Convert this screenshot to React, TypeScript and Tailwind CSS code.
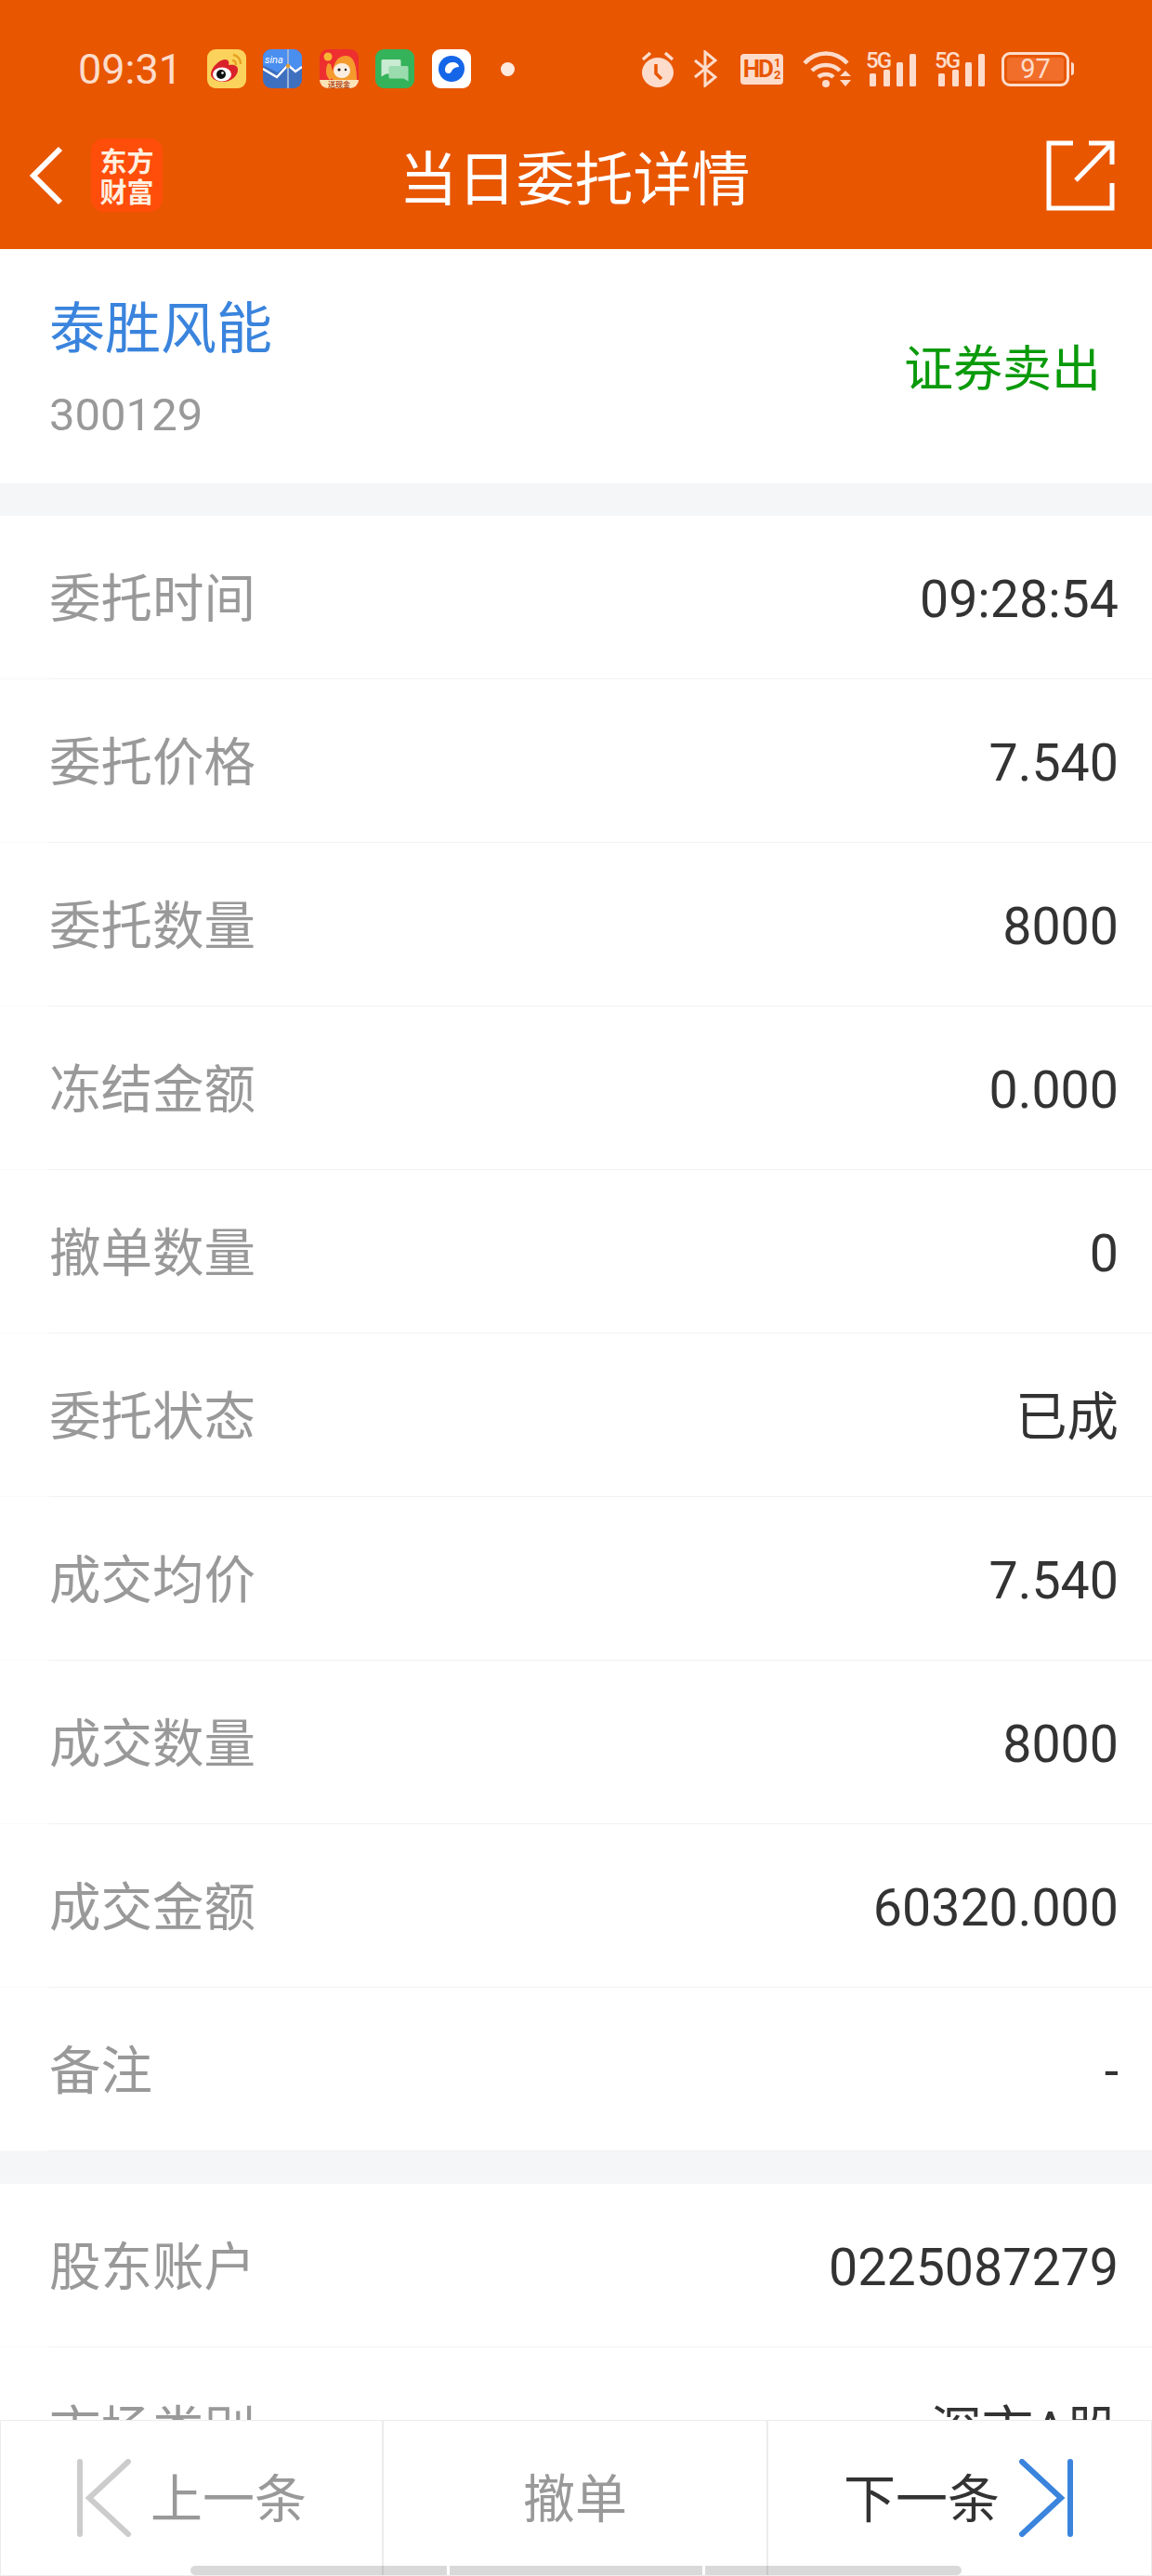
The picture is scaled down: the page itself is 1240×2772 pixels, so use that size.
const firstGroup = [
  ["委托时间", "09:28:54"],
  ["委托价格", "7.540"],
  ["委托数量", "8000"],
  ["冻结金额", "0.000"],
  ["撤单数量", "0"],
  ["委托状态", "已成"],
  ["成交均价", "7.540"],
  ["成交数量", "8000"],
  ["成交金额", "60320.000"],
  ["备注", "-"],
];

const secondGroup = [
  ["股东账户", "0225087279"],
  ["市场类别", "深市A股"],
];

const font = "font-['Roboto','Noto_Sans_CJK_SC',sans-serif]";

const AppIcons = () => (
  <div className="ml-[33px] flex items-center gap-[19px]">
    {/* weibo */}
    <svg width="42" height="42" viewBox="0 0 42 42">
      <rect width="42" height="42" rx="9" fill="#fbd35c" />
      <path d="M4 27c0-7 9-16 15-16 4 0 5 3 4 6 5-1 10 0 10 5 0 7-8 13-15 13-7 0-14-3-14-8z" fill="#d9222a" />
      <ellipse cx="16" cy="27" rx="10" ry="7.500" fill="#fff" />
      <circle cx="15" cy="27" r="5" fill="#111" />
      <circle cx="16.500" cy="25.500" r="1.300" fill="#fff" />
      <path d="M28 6c5 1 8 5 8 10M27 12c3 0 4 2 4 5" stroke="#e8a020" strokeWidth="2.500" fill="none" />
    </svg>
    {/* sina finance */}
    <svg width="42" height="42" viewBox="0 0 42 42" className="-ml-[1px]">
      <rect width="42" height="42" rx="9" fill="#3f70c0" />
      <path d="M0 9a9 9 0 0 1 9-9h24a9 9 0 0 1 9 9v10l-6 4-9-8-11 10-16-8z" fill="#4a8ef0" />
      <path d="M0 21l15 9 12-13 8 7 7-5" stroke="#fff" strokeWidth="2.400" fill="none" />
      <rect x="26" width="2" height="42" fill="#9ab4d8" />
      <circle cx="27" cy="18" r="2.200" fill="#e89a30" />
      <text x="2" y="15" fontSize="11" fontStyle="italic" fill="#fff" fontFamily="Roboto">sina</text>
    </svg>
    {/* red packet game */}
    <svg width="42" height="42" viewBox="0 0 42 42">
      <rect width="42" height="42" rx="9" fill="#ee2f2f" />
      <path d="M14 34c-1-12 2-27 14-27 8 0 12 8 12 27z" fill="#f59a2c" />
      <ellipse cx="24" cy="23" rx="9" ry="8" fill="#fbeee0" />
      <circle cx="21" cy="22" r="1.600" fill="#222" />
      <circle cx="28" cy="22" r="1.200" fill="#222" />
      <circle cx="9" cy="8" r="4.500" fill="#f7b733" />
      <path d="M9 15c-3 6-3 14 2 18l5-3-4-14z" fill="#f59a2c" />
      <path d="M0 33h42v0a9 9 0 0 1-9 9H9a9 9 0 0 1-9-9z" fill="#fbe3b8" />
      <text x="21" y="41" fontSize="8" fontWeight="700" textAnchor="middle" fill="#b4481c" fontFamily="Noto Sans CJK SC">送现金</text>
    </svg>
    {/* messages */}
    <svg width="42" height="42" viewBox="0 0 42 42" className="-ml-[1px]">
      <rect width="42" height="42" rx="9" fill="#34b35a" />
      <path d="M8 11h18a1.500 1.500 0 0 1 1.500 1.500v14h-16l-5 3v-17a1.500 1.500 0 0 1 1.500-1.500z" fill="#c9ebd2" />
      <path d="M16 18h18a1.500 1.500 0 0 1 1.500 1.500v15l-5-3h-14.500a1.500 1.500 0 0 1-1.500-1.500v-10.500a1.500 1.500 0 0 1 1.500-1.500z" fill="#9bdcae" />
    </svg>
    {/* blue circle app */}
    <svg width="42" height="42" viewBox="0 0 42 42">
      <rect width="42" height="42" rx="9" fill="#fff" />
      <circle cx="21" cy="21" r="14" fill="#1565e8" />
      <path d="M14 22c0-5 4-8 8-8s7 2 7 5c-3 0-5 1-7 3-1 2-2 4-4 4s-4-1-4-4z" fill="#fff" />
    </svg>
    <span className="ml-[13px] h-[15px] w-[15px] rounded-full bg-[#fdeadf]" />
  </div>
);

const Signal = ({ className }: { className: string }) => (
  <div className={`relative h-[38px] w-[54px] ${className}`}>
    <span className="absolute left-0 top-[-2px] text-[24px] font-medium leading-none tracking-[-2px] text-[#fddccb] font-['Roboto',sans-serif]">5G</span>
    <svg width="54" height="38" viewBox="0 0 54 38" className="absolute left-0 top-0">
      <rect x="4" y="24" width="7" height="14" rx="1.500" fill="#fddccb" />
      <rect x="19" y="20" width="7" height="18" rx="1.500" fill="#fddccb" />
      <rect x="33" y="12" width="7" height="26" rx="1.500" fill="#fddccb" />
      <rect x="47" y="3" width="7" height="35" rx="1.500" fill="#fddccb" />
    </svg>
  </div>
);

const SystemIcons = () => (
  <div className="ml-auto mr-[84px] flex items-center">
    {/* alarm */}
    <svg width="36" height="40" viewBox="0 0 36 40">
      <ellipse cx="18" cy="24" rx="17" ry="16" fill="#fddccb" />
      <path d="M2 10L10 3M34 10L26 3" stroke="#fddccb" strokeWidth="3.500" />
      <path d="M16 15v10l6 6" stroke="#e85600" strokeWidth="3.500" fill="none" />
    </svg>
    {/* bluetooth */}
    <svg width="25" height="40" viewBox="0 0 25 40" className="ml-[21px]">
      <path d="M1 11l22 18-11 9V2l11 9L1 29" stroke="#fddccb" strokeWidth="3" fill="none" />
    </svg>
    {/* HD */}
    <div className="ml-[25px] flex h-[33px] w-[46px] items-center justify-center rounded-[4px] bg-[#fddccb] text-[26px] font-bold leading-none tracking-[-2px] text-[#e85600] font-['Roboto',sans-serif]">
      HD
      <span className="ml-[2px] flex flex-col text-[13px] leading-[13px] tracking-normal">
        <span>1</span>
        <span>2</span>
      </span>
    </div>
    {/* wifi */}
    <svg width="52" height="40" viewBox="0 0 52 40" className="ml-[21px]">
      <path d="M2 14c13-14 33-14 46 0M10 22c8-8 22-8 30 0M17 29c4-4 12-4 16 0" stroke="#fddccb" strokeWidth="4.500" fill="none" />
      <circle cx="25" cy="36" r="4" fill="#fddccb" />
      <path d="M40 28l6-6 6 6zM40 32l6 7 6-7z" fill="#fddccb" />
    </svg>
    <Signal className="ml-[16px]" />
    <Signal className="ml-[20px]" />
    {/* battery */}
    <div className="ml-[18px] flex items-center">
      <div className="flex h-[37px] w-[73px] items-center rounded-[9px] border-[3px] border-[#fddccb] p-[3px]">
        <div className="flex h-full w-full items-center justify-center rounded-[3px] bg-[#f06e2a] text-[29px] leading-none text-[#fddccb] font-['Roboto',sans-serif]">
          97
        </div>
      </div>
      <span className="ml-[2px] h-[14px] w-[3px] rounded-r bg-[#fddccb]" />
    </div>
  </div>
);

const Header = () => (
  <header className="h-[268px] shrink-0 bg-[#e85600]">
    <div className="flex h-[148px] items-center pl-[84px]">
      <span className="w-[106px] pt-[1px] text-[45px] leading-none text-[#fddccb] font-['Roboto',sans-serif]">09:31</span>
      <AppIcons />
      <SystemIcons />
    </div>
    <div className="relative flex h-[120px] items-center justify-center pb-[30px]">
      <div className="absolute left-[32px] top-[1px] flex items-center">
        <svg width="36" height="64" viewBox="0 0 36 64">
          <path d="M33 3L4 32l29 29" stroke="#fff" strokeWidth="6" fill="none" />
        </svg>
        <div className="ml-[30px] flex h-[79px] w-[77px] flex-col items-center justify-center rounded-[14px] bg-[#ff4d0a] text-[29px] font-bold leading-[33px] text-[#fff0e0] font-['Noto_Sans_CJK_SC',sans-serif]">
          <span>东方</span>
          <span>财富</span>
        </div>
      </div>
      <h1 className={`pr-[3px] text-[63px] font-normal leading-none text-white ${font}`}>当日委托详情</h1>
      <svg width="74" height="76" viewBox="0 0 74 76" className="absolute left-[1126px] top-[3px]">
        <path d="M29 3H3v70h68V46M71 26V3H46M71 3L32 43" stroke="#fff" strokeWidth="5" fill="none" />
      </svg>
    </div>
  </header>
);

const Row = ({ label, value }: { label: string; value: string }) => (
  <div className="h-[176px] border-b border-[#fafafa]">
    <div className="ml-[53px] flex h-[176px] items-center justify-between border-b border-[#f2f2f2] pr-[36px] pt-[7px]">
      <span className="text-[55.5px] leading-none text-[#999999]">{label}</span>
      <span className="text-[55.5px] leading-none text-[#333333]">{value}</span>
    </div>
  </div>
);

const Footer = () => (
  <footer className="relative grid h-[168px] shrink-0 grid-cols-[412px_414px_1fr] border border-[#ececec] bg-white text-[56px] leading-none">
    <div className="flex items-center border-r-2 border-[#ececec] pl-[81px]">
      <svg width="60" height="84" viewBox="0 0 60 84">
        <path d="M4 3v78M56 3L14 42l42 39" stroke="#cccccc" strokeWidth="6" strokeLinecap="round" fill="none" />
      </svg>
      <span className="ml-[20px] pt-[4px] text-[#999999]">上一条</span>
    </div>
    <div className="flex items-center justify-center border-r-2 border-[#ececec] pt-[4px] text-[#999999]">撤单</div>
    <div className="flex items-center justify-end pr-[83px] text-[#333333]">
      <span className="mr-[20px] pt-[4px]">下一条</span>
      <svg width="60" height="84" viewBox="0 0 60 84">
        <path d="M4 3l42 39L4 81M56 3v78" stroke="#3a84dd" strokeWidth="6" strokeLinecap="round" fill="none" />
      </svg>
    </div>
    {/* home indicator */}
    <div className="absolute bottom-0 left-[204px] flex h-[10px] w-[830px] gap-[3px]">
      <span className="w-[276px] rounded-l-full bg-black/15" />
      <span className="w-[272px] bg-black/15" />
      <span className="flex-1 rounded-r-full bg-black/15" />
    </div>
  </footer>
);

export default function App() {
  return (
    <div className={`flex h-[2772px] w-[1240px] flex-col overflow-hidden bg-white ${font}`}>
      <Header />
      <main className="min-h-0 flex-1 overflow-hidden">
        <section className="flex h-[252px] items-center justify-between pl-[53px] pr-[55px] pt-[8px]">
          <div>
            <div className="text-[60px] leading-none text-[#3a84dd]">泰胜风能</div>
            <div className="mt-[37px] text-[49px] leading-none text-[#999999]">300129</div>
          </div>
          <div className="text-[53px] leading-none text-[#0a9a0a]">证券卖出</div>
        </section>
        <div className="h-[35px] bg-[#f5f6f8]" />
        {firstGroup.map(([label, value]) => (
          <Row key={label} label={label} value={value} />
        ))}
        <div className="h-[35px] bg-[#f5f6f8]" />
        {secondGroup.map(([label, value]) => (
          <Row key={label} label={label} value={value} />
        ))}
      </main>
      <Footer />
    </div>
  );
}
